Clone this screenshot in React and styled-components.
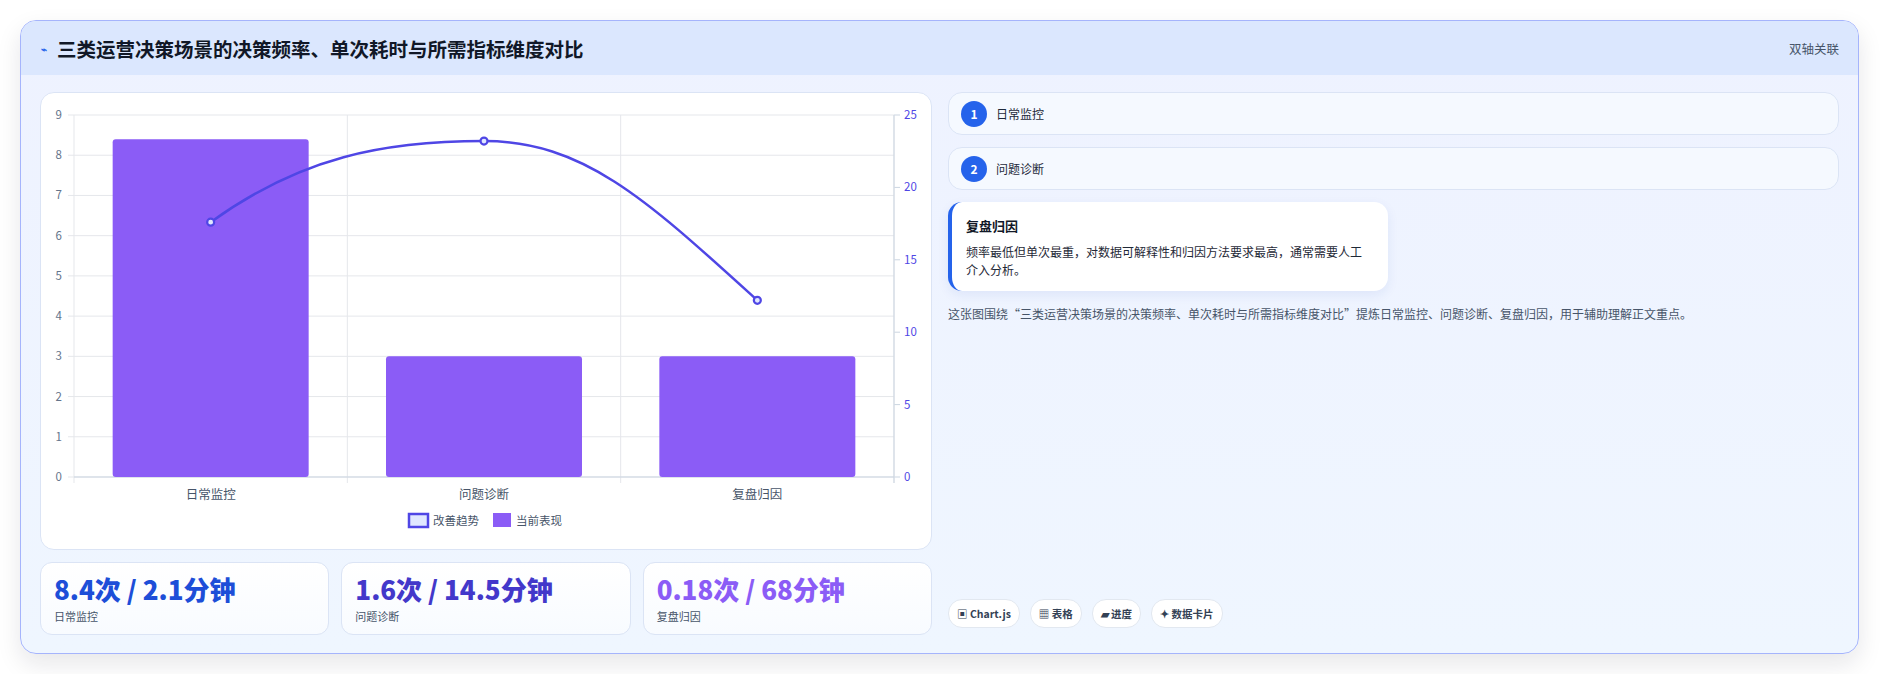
import React from "react";
import styled, { createGlobalStyle } from "styled-components";

const Global = createGlobalStyle`
  html, body { margin: 0; background: #fff; }
  body { font-family: "Noto Sans CJK SC", "Noto Sans", sans-serif; color: #1e293b; }
`;
const Page = styled.div`padding: 20px 21px 20px 20px;`;
const Card = styled.div`
  border: 1px solid #a5b4fc; border-radius: 16px; overflow: hidden;
  background: linear-gradient(180deg, #eef2ff 0%, #eff6ff 100%);
  box-shadow: 0 10px 24px rgba(15, 23, 42, 0.1);
  height: 634px; display: flex; flex-direction: column; box-sizing: border-box;
`;
const Header = styled.div`
  height: 55px; background: #dbe7fe; display: flex; align-items: center;
  justify-content: space-between; padding: 0 19px 0 20px;
`;
const Title = styled.h2`
  margin: 0; font-size: 19.5px; font-weight: 700; color: #111827;
  display: flex; align-items: center; gap: 10px;
`;
const Tag = styled.span`font-size: 12.5px; color: #475569;`;
const Body = styled.div`
  flex: 1; display: grid; grid-template-columns: 892px 1fr; gap: 16px;
  padding: 17px 19px 18px 19px;
`;
const Left = styled.div`display: flex; flex-direction: column; gap: 12px;`;
const ChartPanel = styled.div`
  height: 458px; background: #fff; border: 1px solid #dbe4f5; border-radius: 14px; box-sizing: border-box;
`;
const Stats = styled.div`display: grid; grid-template-columns: repeat(3, 1fr); gap: 12px;`;
const Stat = styled.div`
  height: 73px; box-sizing: border-box; border: 1px solid #dbe4f5; border-radius: 12px;
  background: linear-gradient(180deg, #fff, #f8fbff); padding: 10px 13px;
`;
const StatValue = styled.div`font-size: 26px; font-weight: 800; line-height: 32px; color: ${p => p.$c};`;
const StatLabel = styled.div`font-size: 11px; color: #475569; margin-top: 3px;`;
const Right = styled.div`display: flex; flex-direction: column; gap: 12px;`;
const Item = styled.div`
  height: 43px; box-sizing: border-box; border: 1px solid #dbe4f5; border-radius: 14px;
  background: #f5f9ff; display: flex; align-items: center; gap: 9px; padding: 0 12px;
  font-size: 12px; color: #1e293b;
`;
const Num = styled.span`
  width: 26px; height: 26px; border-radius: 50%; background: #2563eb; color: #fff;
  font-size: 12px; font-weight: 700; display: flex; align-items: center; justify-content: center;
`;
const Active = styled.div`
  width: 440px; box-sizing: border-box; background: #fff; border-radius: 14px;
  border-left: 4px solid #2563eb; padding: 14px 20px 12px 14px;
  box-shadow: 0 4px 12px rgba(30, 64, 175, 0.08);
`;
const ActiveTitle = styled.div`font-size: 13px; font-weight: 700; color: #111827; margin-bottom: 8px;`;
const ActiveText = styled.div`font-size: 12px; line-height: 18px; color: #1f2937;`;
const Desc = styled.div`font-size: 12px; color: #475569; margin-top: 2px;`;
const Pills = styled.div`margin-top: auto; display: flex; gap: 10px; margin-bottom: 7px;`;
const Pill = styled.span`
  height: 27px; padding: 0 8px; border-radius: 14px; background: #fff; border: 1px solid #e2e8f0;
  font-size: 10.5px; font-weight: 700; color: #334155; display: flex; align-items: center;
`;

const X0 = 33, X1 = 853, Y0 = 22, Y1 = 384;
const yL = v => Y1 - (v / 9) * (Y1 - Y0);
const yR = v => Y1 - (v / 25) * (Y1 - Y0);
const cats = ["日常监控", "问题诊断", "复盘归因"];
const bars = [8.4, 3, 3];
const line = [17.6, 23.2, 12.2];
const cw = (X1 - X0) / 3;
const cx = i => X0 + cw * i + cw / 2;

function Chart() {
  const pts = line.map((v, i) => [cx(i), yR(v)]);
  const d = `M${pts[0][0]},${pts[0][1]} C${pts[0][0] + 90},${pts[0][1] - 65} ${pts[1][0] - 100},${pts[1][1]} ${pts[1][0]},${pts[1][1]} C${pts[1][0] + 100},${pts[1][1]} ${pts[2][0] - 110},${pts[2][1] - 100} ${pts[2][0]},${pts[2][1]}`;
  return (
    <svg width="890" height="456" fontFamily="Noto Sans CJK SC, sans-serif">
      {Array.from({ length: 10 }, (_, v) => (
        <g key={v}>
          <line x1={X0 - 6} x2={X1} y1={yL(v)} y2={yL(v)} stroke="#e5e7eb" />
          <text x={X0 - 12} y={yL(v) + 4} fontSize="11.5" fill="#64748b" textAnchor="end">{v}</text>
        </g>
      ))}
      {[0, 5, 10, 15, 20, 25].map(v => (
        <g key={v}>
          <line x1={X1} x2={X1 + 6} y1={yR(v)} y2={yR(v)} stroke="#cbd5e1" />
          <text x={X1 + 10} y={yR(v) + 4} fontSize="11.5" fill="#4f46e5">{v}</text>
        </g>
      ))}
      {[0, 1, 2, 3].map(i => (
        <line key={i} x1={X0 + cw * i} x2={X0 + cw * i} y1={Y0} y2={Y1 + 6} stroke="#e5e7eb" />
      ))}
      <line x1={X0} x2={X1} y1={Y1} y2={Y1} stroke="#cbd5e1" />
      <line x1={X1} x2={X1} y1={Y0} y2={Y1 + 6} stroke="#cbd5e1" />
      {bars.map((v, i) => (
        <rect key={i} x={cx(i) - 98} y={yL(v)} width="196" height={Y1 - yL(v)} rx="3" fill="#8b5cf6" />
      ))}
      {cats.map((c, i) => (
        <text key={c} x={cx(i)} y={Y1 + 22} fontSize="12.5" fill="#475569" textAnchor="middle">{c}</text>
      ))}
      <path d={d} fill="none" stroke="#4f46e5" strokeWidth="2.5" />
      {pts.map(([x, y], i) => (
        <circle key={i} cx={x} cy={y} r="3.5" fill="#e0e7ff" stroke="#4f46e5" strokeWidth="2.2" />
      ))}
      <rect x="368" y="421" width="19" height="13" fill="#e0e7ff" stroke="#4f46e5" strokeWidth="2.5" />
      <text x="392" y="432" fontSize="11.5" fill="#475569">改善趋势</text>
      <rect x="452" y="420" width="18" height="14" fill="#8b5cf6" />
      <text x="475" y="432" fontSize="11.5" fill="#475569">当前表现</text>
    </svg>
  );
}

export default function App() {
  return (
    <Page>
      <Global />
      <Card>
        <Header>
          <Title><span style={{ fontSize: 10, color: "#2563eb" }}>⌁</span>三类运营决策场景的决策频率、单次耗时与所需指标维度对比</Title>
          <Tag>双轴关联</Tag>
        </Header>
        <Body>
          <Left>
            <ChartPanel><Chart /></ChartPanel>
            <Stats>
              <Stat><StatValue $c="#1d4ed8">8.4次 / 2.1分钟</StatValue><StatLabel>日常监控</StatLabel></Stat>
              <Stat><StatValue $c="#4338ca">1.6次 / 14.5分钟</StatValue><StatLabel>问题诊断</StatLabel></Stat>
              <Stat><StatValue $c="#8b5cf6">0.18次 / 68分钟</StatValue><StatLabel>复盘归因</StatLabel></Stat>
            </Stats>
          </Left>
          <Right>
            <Item><Num>1</Num>日常监控</Item>
            <Item><Num>2</Num>问题诊断</Item>
            <Active>
              <ActiveTitle>复盘归因</ActiveTitle>
              <ActiveText>频率最低但单次最重，对数据可解释性和归因方法要求最高，通常需要人工介入分析。</ActiveText>
            </Active>
            <Desc>这张图围绕“三类运营决策场景的决策频率、单次耗时与所需指标维度对比”提炼日常监控、问题诊断、复盘归因，用于辅助理解正文重点。</Desc>
            <Pills>
              <Pill>▣ Chart.js</Pill>
              <Pill>▦ 表格</Pill>
              <Pill>▰ 进度</Pill>
              <Pill>✦ 数据卡片</Pill>
            </Pills>
          </Right>
        </Body>
      </Card>
    </Page>
  );
}
